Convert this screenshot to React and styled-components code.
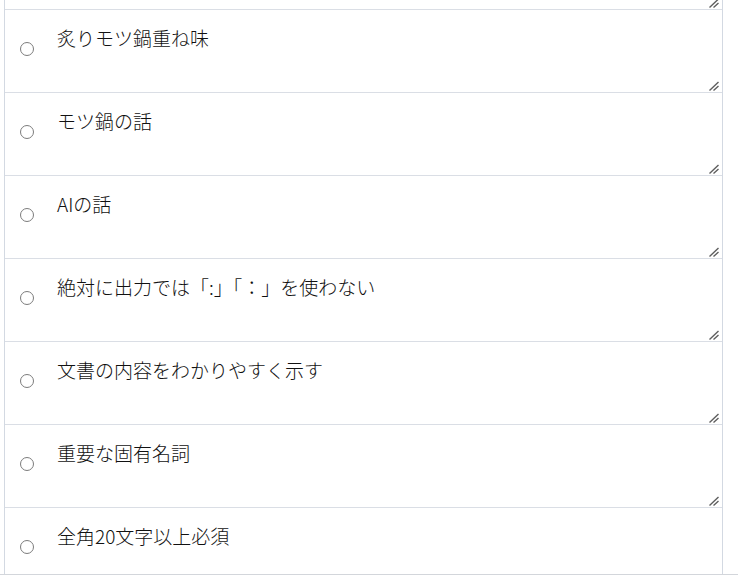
import React from "react";
import styled, { createGlobalStyle } from "styled-components";

const items = [
  "",
  "炙りモツ鍋重ね味",
  "モツ鍋の話",
  "AIの話",
  "絶対に出力では「:」「：」を使わない",
  "文書の内容をわかりやすく示す",
  "重要な固有名詞",
  "全角20文字以上必須",
  "",
];

const GlobalStyle = createGlobalStyle`
  html, body {
    margin: 0;
    padding: 0;
    background: #ffffff;
    overflow: hidden;
  }
  body {
    font-family: "Noto Sans CJK JP", "Noto Sans", sans-serif;
  }
`;

const ScrollArea = styled.div`
  height: 574px;
  overflow: hidden;
  border-bottom: 1px solid #d3d6db;
`;

const List = styled.div`
  margin: -73px 0 0 4px;
  width: 719px;
  border-left: 1px solid #d3d9e2;
  border-right: 1px solid #d3d9e2;
  box-sizing: border-box;
`;

const Row = styled.label`
  position: relative;
  display: flex;
  align-items: flex-start;
  height: 83px;
  box-sizing: border-box;
  border-bottom: 1px solid #dadee5;
`;

const RadioCell = styled.div`
  width: 40px;
  flex: none;
  padding-top: 32px;
  padding-left: 15px;
  box-sizing: border-box;
`;

const Radio = styled.input`
  appearance: none;
  margin: 0;
  width: 14px;
  height: 14px;
  display: block;
  box-sizing: border-box;
  border: 1px solid #7c7c7c;
  border-radius: 50%;
  background: #fff;
`;

const Prompt = styled.textarea`
  flex: 1;
  height: 82px;
  box-sizing: border-box;
  border: none;
  outline: none;
  resize: none;
  margin: 0;
  padding: 14px 12px 0 12px;
  font-family: "Noto Sans CJK JP", "Noto Sans", sans-serif;
  font-size: 19px;
  font-weight: 300;
  line-height: 28px;
  color: #111111;
  background: transparent;
  overflow: hidden;
`;

const Grip = styled.svg`
  position: absolute;
  right: 2px;
  bottom: 1px;
  width: 12px;
  height: 10px;
  pointer-events: none;
`;

export default function App() {
  return (
    <>
      <GlobalStyle />
      <ScrollArea>
        <List>
          {items.map((text, i) => (
            <Row key={i}>
              <RadioCell>
                <Radio type="radio" name="rule" />
              </RadioCell>
              <Prompt defaultValue={text} spellCheck={false} />
              <Grip viewBox="0 0 12 10">
                <path
                  d="M1.5 9.5 L10.5 1 M5.5 9.5 L10.5 5"
                  stroke="#5f5f5f"
                  strokeWidth="1.4"
                  fill="none"
                />
              </Grip>
            </Row>
          ))}
        </List>
      </ScrollArea>
    </>
  );
}
